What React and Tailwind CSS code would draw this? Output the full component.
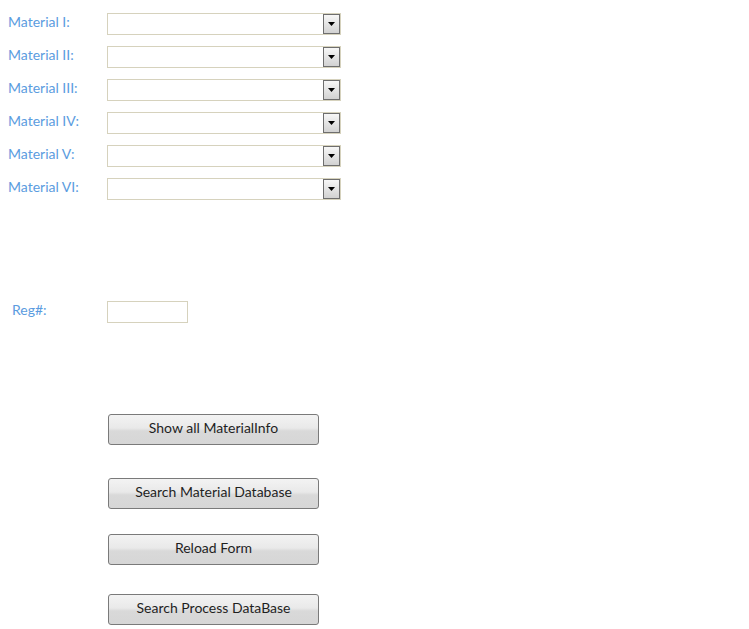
const materials = ['Material I:', 'Material II:', 'Material III:', 'Material IV:', 'Material V:', 'Material VI:']

const buttons = [
  { label: 'Show all MaterialInfo', mt: 'mt-[91px]' },
  { label: 'Search Material Database', mt: 'mt-[33px]' },
  { label: 'Reload Form', mt: 'mt-[25px]' },
  { label: 'Search Process DataBase', mt: 'mt-[29px]' },
]

function Combo() {
  return (
    <div className="relative h-[22px] w-[234px] border border-[#d6d2bd] bg-white">
      <div className="absolute right-0 top-0 flex h-[20px] w-[17px] items-center justify-center border border-[#6e6e6e] bg-gradient-to-b from-[#f7f7f7] to-[#d2d2d2]">
        <svg width="7" height="4" viewBox="0 0 7 4">
          <polygon points="0,0 7,0 3.5,4" fill="#000" />
        </svg>
      </div>
    </div>
  )
}

function FormButton({ label, mt }) {
  return (
    <button
      className={`${mt} ml-[108px] flex h-[31px] w-[211px] items-center justify-center rounded-[3px] border border-[#7a7a7a] bg-[linear-gradient(to_bottom,#f3f3f3_0%,#e9e9e9_45%,#d9d9d9_55%,#d6d6d6_100%)] pb-[4px] text-[14px] text-[#1f1f1f]`}
    >
      {label}
    </button>
  )
}

export default function App() {
  return (
    <div className="min-h-[629px] w-[749px] bg-white pt-[13px] font-['Lato','Open_Sans',sans-serif]">
      <div className="flex flex-col gap-[11px]">
        {materials.map((m) => (
          <div key={m} className="flex h-[22px] items-start">
            <span className="w-[107px] pl-[8px] text-[14px] leading-[18px] text-[#5b9ce0]">{m}</span>
            <Combo />
          </div>
        ))}
      </div>

      <div className="mt-[101px] flex h-[22px] items-start">
        <span className="w-[107px] pl-[12px] text-[14px] leading-[18px] text-[#5b9ce0]">Reg#:</span>
        <div className="h-[22px] w-[81px] border border-[#d6d2bd] bg-white" />
      </div>

      {buttons.map((b) => (
        <FormButton key={b.label} label={b.label} mt={b.mt} />
      ))}
    </div>
  )
}
